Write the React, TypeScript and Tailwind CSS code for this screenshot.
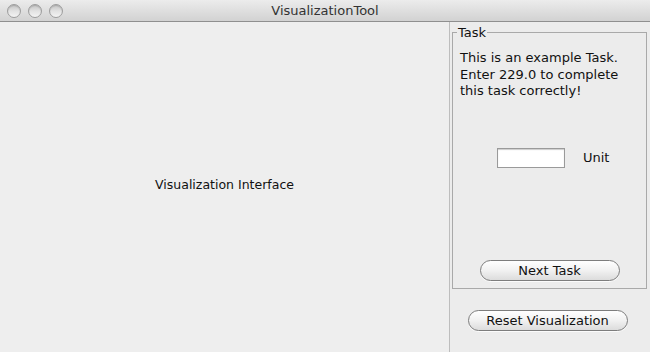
import React from "react";

const font = { fontFamily: '"DejaVu Sans", "Liberation Sans", sans-serif' };

const Light = () => (
  <div className="h-[14px] w-[14px] rounded-full border border-[#9d9d9d] bg-gradient-to-b from-[#c4c4c4] via-[#e2e2e2] to-[#f4f4f4] shadow-[inset_0_1px_1px_rgba(0,0,0,0.15)]" />
);

const AquaButton = ({ label, className }: { label: string; className: string }) => (
  <button
    className={`h-[21px] rounded-full border border-[#7d7d7d] bg-gradient-to-b from-[#ffffff] via-[#f1f1f1] to-[#dcdcdc] text-[13px] text-[#111] leading-none shadow-[0_1px_0_rgba(255,255,255,0.8)] ${className}`}
  >
    {label}
  </button>
);

export default function App() {
  return (
    <div className="flex h-[352px] w-[650px] flex-col bg-[#ededed] text-[#111]" style={font}>
      <div className="relative flex h-[22px] items-center border-b border-[#8f8f8f] bg-gradient-to-b from-[#ececec] to-[#d2d2d2]">
        <div className="flex gap-[7px] pl-[7px]">
          <Light />
          <Light />
          <Light />
        </div>
        <div className="absolute inset-0 flex items-center justify-center text-[13px] text-[#333]">
          VisualizationTool
        </div>
      </div>

      <div className="flex flex-1">
        <div className="flex w-[450px] items-center justify-center border-r border-[#bdbdbd] bg-[#eeeeee] text-[12.5px]">
          <span className="mt-[-3px]">Visualization Interface</span>
        </div>

        <div className="flex flex-1 flex-col bg-[#ececec] pt-[3px]">
          <fieldset className="ml-[2px] mr-[3px] border border-[#a9a9a9] px-[7px] pb-[7px]">
            <legend className="ml-[-3px] px-[1px] text-[13px] leading-[15px]">Task</legend>
            <div className="flex h-[241px] flex-col">
              <p className="mt-[10px] text-[13px] leading-[16.5px]">
                This is an example Task.
                <br />
                Enter 229.0 to complete
                <br />
                this task correctly!
              </p>
              <div className="mt-[48px] flex items-center pl-[37px]">
                <input
                  className="h-[20px] w-[68px] border border-[#9a9a9a] bg-white shadow-[inset_0_1px_1px_rgba(0,0,0,0.2)] outline-none"
                  type="text"
                />
                <span className="ml-[18px] text-[13px]">Unit</span>
              </div>
              <div className="mt-auto flex justify-center">
                <AquaButton label="Next Task" className="w-[140px]" />
              </div>
            </div>
          </fieldset>

          <div className="mt-[21px] flex justify-center pr-[5px]">
            <AquaButton label="Reset Visualization" className="w-[160px]" />
          </div>
        </div>
      </div>
    </div>
  );
}
